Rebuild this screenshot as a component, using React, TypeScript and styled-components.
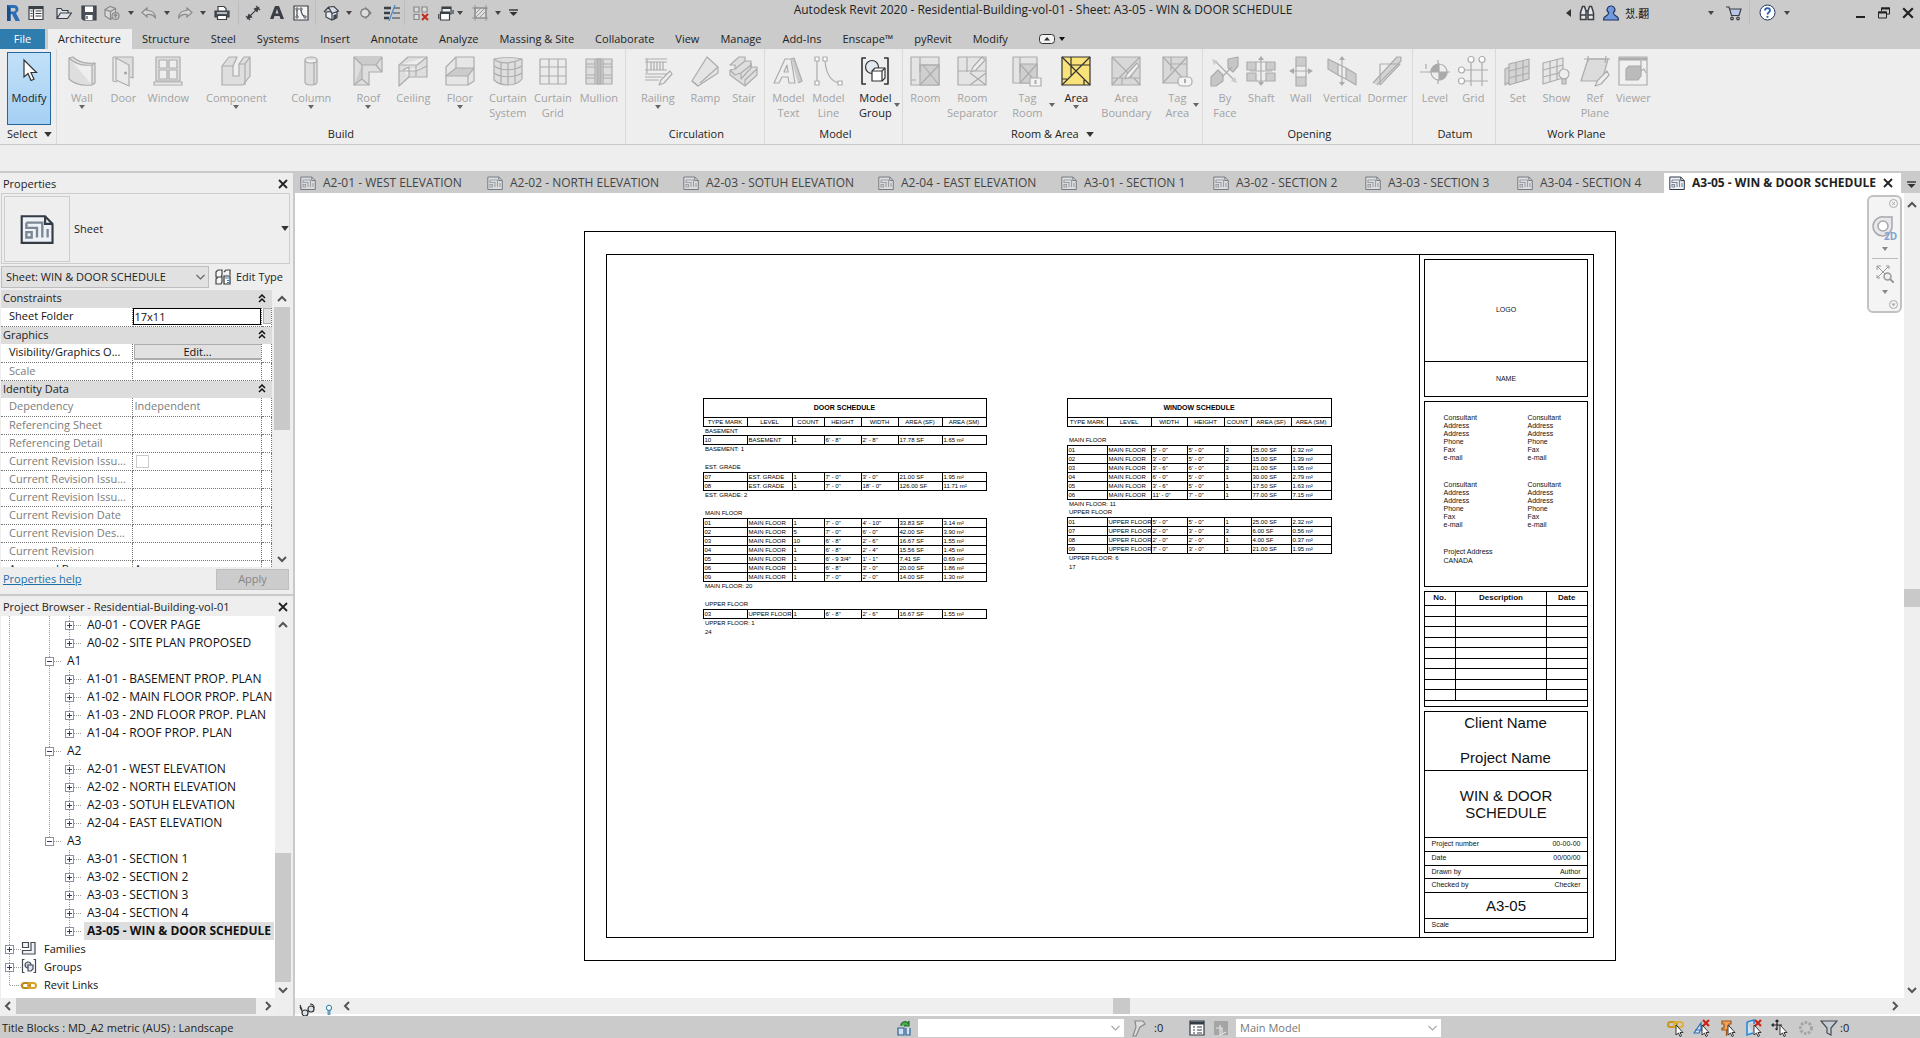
import React from "react";
import styled, { createGlobalStyle, css } from "styled-components";

const ui = '"Open Sans", "Noto Sans", "Noto Sans CJK KR", sans-serif';
const plot = '"Liberation Sans", Arial, sans-serif';

const Global = createGlobalStyle`
  *, *::before, *::after { box-sizing: border-box; }
  html, body, #root { height: 100%; }
  body { margin: 0; overflow: hidden; background: #cbcbcb; font: 11px/16px ${ui}; color: #222; }
  button, input, select { font: inherit; color: inherit; margin: 0; padding: 0; border: 0; border-radius: 0; background: none; }
  svg { display: block; flex: none; fill: none; }
`;

/* ---------- generic pieces ---------- */

const Window = styled.div`
  display: flex;
  flex-direction: column;
  height: 100vh;
  min-height: 0;
`;

const IconButton = styled.button<{ $w?: number }>`
  display: flex;
  align-items: center;
  justify-content: center;
  flex: none;
  width: ${(p) => p.$w ?? 24}px;
  height: 24px;
`;

const Tri = ({ c = "#444", s = 6 }: { c?: string; s?: number }) => (
  <svg width={s} height={s / 2 + 1} viewBox="0 0 6 4">
    <path d="M0 0h6L3 4z" fill={c} />
  </svg>
);

const Chevron = ({ dir, c = "#555" }: { dir: "up" | "down" | "left" | "right"; c?: string }) => {
  const d = {
    up: "M1 7l4-4 4 4",
    down: "M1 3l4 4 4-4",
    left: "M7 1L3 5l4 4",
    right: "M3 1l4 4-4 4",
  }[dir];
  return (
    <svg width="10" height="10" viewBox="0 0 10 10">
      <path d={d} stroke={c} strokeWidth="2" />
    </svg>
  );
};

const CloseX = ({ s = 10 }: { s?: number }) => (
  <svg width={s} height={s} viewBox="0 0 10 10">
    <path d="M1 1l8 8M9 1L1 9" stroke="#222" strokeWidth="1.8" />
  </svg>
);

const SheetIcon = ({ dark, s = 16 }: { dark?: boolean; s?: number }) => {
  const a = dark ? "#333b45" : "#777c84";
  const b = dark ? "#7b8797" : "#9aa0a8";
  return (
    <svg width={s} height={s} viewBox="0 0 16 16">
      <path d="M.8 2h11l3.5 3.6V14.500H.8z" fill={dark ? "#eef1f5" : "#dcdcdc"} stroke={a} />
      <path d="M11.8 2v3.600h3.500" stroke={a} />
      <path d="M3 5h7.500v7M3 5v2.500h5V12M3 9.500h2.500V12H3zM13 8v4" stroke={b} strokeWidth="1.100" />
    </svg>
  );
};

/* ---------- title bar ---------- */

const TitleBar = styled.header`
  display: grid;
  grid-template-columns: auto 1fr auto;
  align-items: center;
  height: 29px;
  flex: none;
  padding-bottom: 4px;
  background: #cbcbcb;
`;

const Quick = styled.div`
  display: flex;
  align-items: center;
  width: 524px;
`;

const Right = styled(Quick)`
  width: 358px;
`;

const AppTitle = styled.h1`
  margin: 0;
  padding-bottom: 6px;
  font-size: 12px;
  font-weight: 400;
  text-align: center;
  white-space: nowrap;
`;

const VSep = styled.span`
  flex: none;
  width: 1px;
  height: 24px;
  background: #bcbcbc;
`;

const Grow = styled.span`
  flex: 1;
`;

const RevitLogo = styled.span`
  flex: none;
  width: 26px;
  display: flex;
  justify-content: center;
`;

const UserName = styled.span`
  width: 80px;
  padding-left: 2px;
  font: 11px/14px "Noto Sans CJK KR", sans-serif;
`;

const Q = ({ children }: { children: React.ReactNode }) => (
  <svg width="16" height="16" viewBox="0 0 16 16" stroke="#3a3f46" strokeWidth="1.2">
    {children}
  </svg>
);

const quickIcons: Record<string, React.ReactNode> = {
  home: <Q><path d="M1 1.500h14v13H1z" fill="#fff" /><path d="M1 3h14" strokeWidth="2.400" /><path d="M5.500 4v10M7.500 6h6M7.500 8.500h6M7.500 11h6M2.500 6h2M2.500 8.500h2M2.500 11h2" /></Q>,
  open: <Q><path d="M1 13.500v-10h4l1.500 2H12V8M1 13.500L4.500 8H15.500l-4 5.500z" fill="#dfe3e8" /></Q>,
  save: <Q><path d="M1 1h14v14H2.500L1 13.500z" fill="#4a505a" /><path d="M4 1.500h8V7H4zM4.500 10h7v5h-7z" fill="#fff" stroke="none" /><path d="M6 11v3" /></Q>,
  sync: <Q><g stroke="#8a8a8a"><path d="M1 4.500L6 1.500l5.500 2v7l-5 4L1 11zM1 4.500l5.500 2 5-3M6.500 6.500v8" fill="#d8d8d8" /><circle cx="11.500" cy="11" r="3.500" fill="#c4c4c4" /><path d="M10 11l1.500-2 1.500 2M11.500 9v4" /></g></Q>,
  undo: <Q><path d="M6 3L1 7.500 6 12V9.500c4-.5 6.500 0 8.500 4C14.500 8 11 5.500 6 5.500z" stroke="#8a8a8a" fill="#d6d6d6" /></Q>,
  redo: <Q><path d="M10 3l5 4.500L10 12V9.500c-4-.5-6.500 0-8.500 4C1.500 8 5 5.500 10 5.500z" stroke="#8a8a8a" fill="#d6d6d6" /></Q>,
  print: <Q><path d="M4 6V1.500h6l2 2V6" fill="#fff" /><path d="M1 6h14v6H1z" fill="#4a505a" /><path d="M3.500 10.500h9v4h-9z" fill="#fff" /><path d="M3 8h10" stroke="#fff" /></Q>,
  measure: <Q><path d="M3 13L13 3" /><path d="M13.500 2.500L9.500 4l2.500 2.500zM2.500 13.500L4 9.500 6.500 12z" fill="#3a3f46" /><path d="M11 1l4 4M1 11l4 4" /></Q>,
  detail: <Q><path d="M1 1h14v14H1z" fill="#f4f4f4" /><path d="M4 4v8M8 4c0 4 1 7 5 8" stroke="#4a505a" /><path d="M3 3h2v2H3zM3 11h2v2H3zM7 3h2v2H7zM11 11h2v2h-2z" fill="#fff" strokeWidth=".8" /></Q>,
  house: <Q><path d="M3 7v5l6 3 5-2.500V6.500z" fill="#e9eef4" /><path d="M1 7l4.500-5L11 1.500 15.500 6 9 8.500 5.500 2" fill="#d5dce4" /><path d="M9 8.500V15" /><path d="M11 10.500l2-.7v3.200l-2 1z" fill="#4a505a" /></Q>,
  section: <Q><path d="M7 1.500L14 8l-7 6.500z" fill="#8a8a8a" stroke="none" /><circle cx="7" cy="8" r="4.200" stroke="#777" fill="#dedede" /></Q>,
  thin: <Q><path d="M0 3h7M0 8h6M0 13h5" strokeWidth="2.400" /><path d="M10 3h6M9 8h7M8 13h8" strokeWidth="1" /><path d="M11 0L5 16" stroke="#3b8bd6" /></Q>,
  closeHidden: <Q><path d="M1 2h5v5H1zM9 2h5v5H9zM1 9.500h5v5H1z" fill="#ddd" stroke="#888" /><path d="M9 9l6 6M15 9l-6 6" stroke="#c22b20" strokeWidth="2" /></Q>,
  switchWin: <Q><path d="M4 2h9v7H4z" fill="#eee" /><path d="M2.500 7h9v8h-9z" fill="#fff" /><path d="M3 8h8M4 3h9" strokeWidth="2" /><path d="M15 5V9M.8 9v5" /></Q>,
  hatch: <Q><g stroke="#8a8a8a"><path d="M3 3h11v10H3z" fill="#ddd" /><path d="M0 3h16M3 0v16M14 0v16M0 13h16M4 8l5-5M4 12l9-9M8 12l5-5" strokeWidth=".8" /></g></Q>,
  find: <Q><path d="M2 6l1.500-4.500h2L7 6v8.500H1.500V8zM14 6l-1.500-4.500h-2L9 6v8.500h5.500V8z" fill="#e6e6e6" strokeWidth="1.500" /><path d="M7 6h2M1.500 10H7M9 10h5.500" strokeWidth="1.500" /></Q>,
  user: <Q><path d="M8 1a3.600 3.600 0 0 1 2.400 6.500c0 2 .6 2.500 4 4.500.8.600 1 1.500 1 3H.6c0-1.500.2-2.400 1-3 3.400-2 4-2.500 4-4.500A3.600 3.600 0 0 1 8 1z" fill="#6e9ae0" stroke="#24335e" /></Q>,
  cart: <Q><path d="M0 2h3l2.500 8.500H13L15 4H4" fill="#b9c6ea" /><circle cx="6" cy="13.500" r="1.300" /><circle cx="12" cy="13.500" r="1.300" /></Q>,
};

const TitleRow = () => (
  <TitleBar>
    <Quick>
      <RevitLogo>
        <svg width="16" height="18" viewBox="0 0 16 18">
          <path d="M2 1h7c5 0 6 6 2 8l4 8h-4.500L7 10H5.500v7H2z" fill="#2c6db5" />
          <path d="M5.500 4H9c2 0 2 3.500 0 3.500H5.500z" fill="#cbcbcb" />
          <path d="M2 1l3.500 3v13H2z" fill="#184f8c" />
        </svg>
      </RevitLogo>
      <IconButton $w={20} aria-label="Home">{quickIcons.home}</IconButton>
      <IconButton $w={36} aria-label="Open">{quickIcons.open}</IconButton>
      <IconButton $w={14} aria-label="Save">{quickIcons.save}</IconButton>
      <IconButton $w={32} aria-label="Synchronize">{quickIcons.sync}</IconButton>
      <IconButton $w={6} aria-label="Synchronize options"><Tri /></IconButton>
      <IconButton $w={30} aria-label="Undo">{quickIcons.undo}</IconButton>
      <IconButton $w={6} aria-label="Undo options"><Tri /></IconButton>
      <IconButton $w={30} aria-label="Redo">{quickIcons.redo}</IconButton>
      <IconButton $w={6} aria-label="Redo options"><Tri /></IconButton>
      <IconButton $w={32} aria-label="Print">{quickIcons.print}</IconButton>
      <VSep />
      <IconButton $w={28} aria-label="Measure">{quickIcons.measure}</IconButton>
      <IconButton $w={20} aria-label="Text">
        <svg width="14" height="15" viewBox="0 0 14 15"><path d="M5 1h4l5 13h-3.500l-1-3h-5l-1 3H0zM7 4L5.500 8.500h3z" fill="#3a3f46" fillRule="evenodd" /></svg>
      </IconButton>
      <IconButton $w={28} aria-label="Detail view">{quickIcons.detail}</IconButton>
      <VSep />
      <IconButton $w={30} aria-label="3D view">{quickIcons.house}</IconButton>
      <IconButton $w={6} aria-label="3D view options"><Tri /></IconButton>
      <IconButton $w={28} aria-label="Section">{quickIcons.section}</IconButton>
      <IconButton $w={24} aria-label="Thin lines">{quickIcons.thin}</IconButton>
      <VSep />
      <IconButton $w={32} aria-label="Close hidden windows">{quickIcons.closeHidden}</IconButton>
      <IconButton $w={18} aria-label="Switch windows">{quickIcons.switchWin}</IconButton>
      <IconButton $w={10} aria-label="Window options"><Tri /></IconButton>
      <IconButton $w={30} aria-label="Hatch">{quickIcons.hatch}</IconButton>
      <IconButton $w={6} aria-label="Hatch options"><Tri /></IconButton>
      <IconButton aria-label="Customize">
        <svg width="9" height="8" viewBox="0 0 9 8"><path d="M0 1h9" stroke="#333" strokeWidth="1.400" /><path d="M.5 3h8l-4 4z" fill="#333" /></svg>
      </IconButton>
    </Quick>
    <AppTitle>Autodesk Revit 2020 - Residential-Building-vol-01 - Sheet: A3-05 - WIN &amp; DOOR SCHEDULE</AppTitle>
    <Right>
      <IconButton $w={13} aria-label="Collapse search">
        <svg width="5" height="8" viewBox="0 0 5 8"><path d="M5 0v8L0 4z" fill="#333" /></svg>
      </IconButton>
      <IconButton aria-label="Search">{quickIcons.find}</IconButton>
      <IconButton aria-label="Account">{quickIcons.user}</IconButton>
      <UserName>챘.翻</UserName>
      <IconButton $w={16} aria-label="Account menu"><Tri /></IconButton>
      <IconButton $w={30} aria-label="Store">{quickIcons.cart}</IconButton>
      <VSep />
      <IconButton $w={34} aria-label="Help">
        <svg width="17" height="17" viewBox="0 0 17 17"><circle cx="8.500" cy="8.500" r="7.500" fill="#fff" stroke="#24335e" /><path d="M6 6.500c0-3.200 5-3.200 5 0 0 1.800-2.500 1.800-2.500 4" stroke="#2b5cb0" strokeWidth="1.800" /><circle cx="8.500" cy="12.800" r="1.100" fill="#2b5cb0" /></svg>
      </IconButton>
      <IconButton $w={6} aria-label="Help menu"><Tri /></IconButton>
      <Grow />
      <IconButton aria-label="Minimize"><svg width="9" height="10" viewBox="0 0 9 10"><path d="M0 9h9" stroke="#222" strokeWidth="2" /></svg></IconButton>
      <IconButton aria-label="Restore"><svg width="12" height="12" viewBox="0 0 12 12"><path d="M3.500 4V1h8v6H9M.5 5h8v6h-8z" stroke="#222" /><path d="M3 1.500h9M0 5.500h9" stroke="#222" strokeWidth="2" /></svg></IconButton>
      <IconButton aria-label="Close"><CloseX s={12} /></IconButton>
    </Right>
  </TitleBar>
);

/* ---------- ribbon tabs ---------- */

const RibbonTabs = styled.nav`
  display: flex;
  flex: none;
  height: 20px;
  background: #cbcbcb;
`;

const RibbonTab = styled.button<{ $kind?: "file" | "active" }>`
  padding: 0 11px 0 10px;
  line-height: 20px;
  white-space: nowrap;
  ${(p) => p.$kind === "file" && css`width: 45px; margin-right: 3px; padding: 0; background: #2f7cae; color: #fff;`}
  ${(p) => p.$kind === "active" && css`background: #eeeeee;`}
`;

const RibbonToggle = styled.button`
  display: flex;
  align-items: center;
  gap: 4px;
  margin-left: 20px;
`;

const tabNames = ["Structure", "Steel", "Systems", "Insert", "Annotate", "Analyze", "Massing & Site", "Collaborate", "View", "Manage", "Add-Ins", "Enscape™", "pyRevit", "Modify"];

/* ---------- ribbon ---------- */

const Ribbon = styled.section`
  display: flex;
  flex: none;
  height: 96px;
  background: #eeeeee;
  border-bottom: 1px solid #c9c9c9;
`;

const Panel = styled.div<{ $pad: number; $end: number }>`
  display: flex;
  flex-direction: column;
  justify-content: space-between;
  padding: 3px ${(p) => p.$end}px 2px ${(p) => p.$pad}px;
  border-right: 1px solid #dadada;
  &:last-child { border-right: 0; }
`;

const Tools = styled.div`
  display: flex;
  height: 74px;
`;

const PanelTitle = styled.div`
  display: flex;
  align-items: center;
  justify-content: center;
  gap: 7px;
  line-height: 16px;
`;

const Tool = styled.button<{ $w: number; $state?: "on" | "active" }>`
  position: relative;
  display: flex;
  flex-direction: column;
  align-items: center;
  width: ${(p) => p.$w}px;
  height: 73px;
  padding-top: ${(p) => (p.$state === "active" ? 1 : 2)}px;
  line-height: 15px;
  white-space: nowrap;
  color: ${(p) => (p.$state ? "#222" : "#a3a3a3")};
  ${(p) => p.$state === "active" && css`
    border: 1px solid #2467a0;
    background: linear-gradient(#c2e0f8, #a5d0f3);
  `}
`;

const ToolText = styled.span`
  margin-top: 2px;
  text-align: center;
  white-space: pre-line;
`;

const SideArrow = styled.span`
  position: absolute;
  right: 0;
  bottom: 18px;
`;

const I = ({ children, c = "#acacac" }: { children: React.ReactNode; c?: string }) => (
  <svg width="32" height="34" viewBox="0 0 32 32" stroke={c} strokeWidth="1.2" strokeLinejoin="round">
    {children}
  </svg>
);

const g = "#dedede";
const toolIcons: Record<string, React.ReactNode> = {
  modify: <svg width="32" height="34" viewBox="0 0 32 32"><path d="M11 5v17l4-3.500 3 7 3-1.300-3-6.700h5.500z" fill="#fff" stroke="#333" strokeWidth="1.200" /></svg>,
  wall: <I><path d="M3 3l4-1c5 5 13 7 22 6v20l-3 2C16 31 8 29 3 24z" fill={g} /><path d="M3 3c6 6 14 8 23 7v20M26 10l3-2" fill="#eee" /></I>,
  door: <I><path d="M6 2h20v21l-3-1" fill={g} /><path d="M6 2v24l4 1" /><path d="M9 3l13 7v21L9 25z" fill="#eaeaea" /><circle cx="18.500" cy="18" r="1" fill="#777" /></I>,
  window: <I><path d="M4 2h24v24H4z" fill={g} /><path d="M7 5h8v8H7zM17 5h8v8h-8zM7 15h8v9H7zM17 15h8v9h-8z" fill="#eee" /><path d="M2 27h28v3H2z" fill="#eaeaea" /></I>,
  component: <I><path d="M2 11l7-9h8l-4 9v10h6V9l5-7h6v19l-7 9H2z" fill={g} /><path d="M2 11h11M19 9h6l5-7M25 9v21" /></I>,
  column: <I><path d="M10 5c0-4 12-4 12 0v22c0 4-12 4-12 0z" fill={g} /><path d="M10 5c0 4 12 4 12 0M19 7v22" fill="#f2f2f2" /></I>,
  roof: <I><path d="M2 2h28v15H17v13H2z" fill={g} /><path d="M2 2l8 8h14l6-8M10 10v14l-8 6M10 24l7 6M24 10l6 7" fill="#ccc" /></I>,
  ceiling: <I><path d="M2 10l9-8h19v20H12l-10 9z" fill={g} /><path d="M2 10h18l10-8M2 16h17l11-5M12 22V12l-6 3" fill="#eee" /><path d="M19 11v10" /></I>,
  floor: <I><path d="M2 12L12 2h18v24l-6 4H2z" fill="#e6e6e6" /><path d="M2 21l10-8h18l-6 8zM24 21v9M12 2v11" fill="#ccc" /></I>,
  csystem: <I><path d="M2 4c8-2 20-2 28 0v20c-3 4-8 6-14 6S5 28 2 25z" fill={g} /><path d="M2 4c6 5 16 5 28 0M2 11c7 5 20 5 28 0M2 18c7 5 20 5 28 0M9 7v22M16 8v22M23 7v22" fill="none" /></I>,
  cgrid: <I><path d="M3 4h26v25H3z" fill="#ebebeb" /><path d="M12 4v25M21 4v25M3 12h26M3 21h26" /></I>,
  mullion: <I><path d="M3 4h26v25H3z" fill={g} /><path d="M12 4v25M20 4v25M3 9h9M3 12h9M3 20h9M3 23h9M20 9h9M20 12h9M20 20h9M20 23h9" /><path d="M14 4h4v25h-4z" fill="#bbb" /></I>,
  railing: <I><path d="M3 4h22M3 7h22M3 15h22M5 4v14M9 7v8M12 7v8M15 7v8M18 7v8M21 7v8M3 19h22M3 22h17M3 25h14" /><path d="M28 16l-9 9-2 5 5-2 8-9z" fill="#eee" /></I>,
  ramp: <I><path d="M3 26L18 2l11 10v6L9 31z" fill="#e4e4e4" /><path d="M3 26l6 5M29 12L11 28" /></I>,
  stair: <I><path d="M2 10l9-8h6v4h6v6h6v8L17 31 2 20v-5l5-1v-4z" fill={g} /><path d="M7 14l10-8M13 18l10-8M2 15l5 5 6-2v6l10-11v-5M17 31v-6l12-11" /></I>,
  mtext: <I><path d="M2 28L13 4h6l4 24h-6l-1-6h-6l-3 6zM12 17h4l-1-7z" fill="#eee" /><path d="M19 4l3-1 8 23-4 2" fill="#ccc" /></I>,
  mline: <I><path d="M5 6v20M13 6c1 12 5 20 14 22" /><path d="M3 2h4v4H3zM3 26h4v4H3zM11 2h4v4h-4zM26 26h4v4h-4z" fill="#fff" /></I>,
  mgroup: <I c="#333"><path d="M7 3H3v26h4M25 3h4v26h-4" strokeWidth="1.600" /><circle cx="13" cy="12" r="6.500" fill="#e2e9f0" /><path d="M13 16l3-3h10v10l-3 3H13z" fill="#fff" /><path d="M13 16h10v10M23 16l3-3" /></I>,
  room: <I><path d="M2 2h28v28H2z" fill="#e4e4e4" /><path d="M11 10h19v20H11z" fill="#cfcfcf" /><path d="M11 2v15M11 10h19L11 30M14 10l16 20M2 25h5" /></I>,
  rsep: <I><path d="M2 2h28v28H2z" fill="#e4e4e4" /><path d="M11 2v15M2 16h28M14 18l16 12M30 18L14 30" /><path d="M26 2l-9 10-2 5 5-2 9-10z" fill="#eee" /></I>,
  troom: <I><path d="M2 2h24v26H2z" fill="#e4e4e4" /><path d="M9 9h17v19H9z" fill="#cfcfcf" /><path d="M9 2v16M9 9l16 18M26 9L9 28" /><path d="M19 23h11v8H19z" fill="#f4f4f4" /><path d="M24.500 25v4" strokeWidth="2" /></I>,
  area: <I c="#333"><path d="M2 2h28v28H2z" fill="#f9e27a" /><path d="M2 2l28 28M30 2L2 30M11 2v18M11 10h19M2 24h5M24 30v-5" /></I>,
  abound: <I><path d="M2 2h28v28H2z" fill="#d8d8d8" /><path d="M2 2l20 20M30 2L9 23M2 23h28M8 23l-6 7M24 23l6 7M12 23v7" /><path d="M27 8L17 19l-2 5 5-2 9-11z" fill="#eee" /></I>,
  tarea: <I><path d="M2 2h24v26H2z" fill="#d8d8d8" /><path d="M2 2l24 26M26 2L2 28M10 9h16M10 2v14" /><rect x="17" y="22" width="14" height="9" rx="4" fill="#f4f4f4" /><path d="M24 24v4" strokeWidth="2" /></I>,
  byface: <I><path d="M2 22l7-7 5 5v6l-7 5H2zM19 4l10-2v9l-5 6-5-4z" fill="#c6c6c6" /><path d="M7 7l18 18M13 22L23 12" /><path d="M3 4l6 2-4 4zM28 28l-6-2 4-4z" fill="#ccc" stroke="none" /></I>,
  shaft: <I><path d="M2 7h9v8H2zM21 7h9v8h-9zM2 18h9v8H2zM21 18h9v8h-9z" fill="#ccc" /><path d="M11 7h10M11 26h10M16 3v26M5 16h22" /><path d="M16 1l3 4h-6zM16 31l3-4h-6z" fill="#aaa" stroke="none" /></I>,
  owall: <I><path d="M11 2h10v9H11zM11 22h10v9H11z" fill="#ccc" /><path d="M11 11v11M21 11v11M6 16h20" /><path d="M4 16l5-3v6zM28 16l-5-3v6z" fill="#aaa" stroke="none" /></I>,
  vertical: <I><path d="M2 4l10 5v11L2 14zM20 13l10 6v11l-10-6z" fill="#ccc" /><path d="M12 9l8 4M12 20l8 4M16 3v26" /><path d="M16 1l3 4h-6zM16 31l3-4h-6z" fill="#aaa" stroke="none" /></I>,
  dormer: <I><path d="M2 28L26 2h4v4L6 30" fill="#d4d4d4" /><path d="M9 30V9h20L9 30" /></I>,
  level: <I><path d="M1 17h30M7 9v5M19 5v24" /><circle cx="20" cy="17" r="8" fill="#eee" /><path d="M20 9a8 8 0 0 0-8 8h8zM20 25a8 8 0 0 0 8-8h-8z" fill="#aaa" /></I>,
  grid: <I><path d="M14 8v23M25 8v23M8 15h23M8 26h23" /><circle cx="14" cy="4.500" r="3" fill="#fff" /><circle cx="25" cy="4.500" r="3" fill="#fff" /><circle cx="4.500" cy="15" r="3" fill="#fff" /><circle cx="4.500" cy="26" r="3" fill="#fff" /></I>,
  set: <I><path d="M3 14l4-2v15l-4 3zM7 9l20-5v20L7 30z" fill="#d4d4d4" /><path d="M14 7v21M21 5v21M7 16l20-5M7 23l20-5" /></I>,
  show: <I><path d="M3 8l20-5v20L3 29z" fill="#e6e6e6" /><path d="M10 6v21M17 4v21M3 15l20-5M3 22l20-5" /><circle cx="24" cy="19" r="5" fill="#eee" /><path d="M22 24h4v5h-4z" fill="#ccc" /></I>,
  ref: <I><path d="M9 4h20l-6 22H2z" fill="#dcdcdc" /><path d="M5 4h26M9 1v6M27 1l-1 7" /><path d="M28 16l-9 9-3 6 6-2 8-9z" fill="#eee" /></I>,
  viewer: <I><path d="M2 2h28v28H2z" fill="#f0f0f0" /><path d="M2 4h28" strokeWidth="3" /><path d="M9 14l3-3h12v10l-3 4H9z" fill="#bbb" /><path d="M24 3v13l3-2 2 4" fill="#eee" /></I>,
};

type ToolSpec = { icon: string; label: string; w: number; arrow?: "below" | "side"; state?: "on" | "active" };

const panels: { title: string; pad: number; end: number; menu?: boolean; tools: ToolSpec[] }[] = [
  { title: "Select", pad: 7, end: 4, menu: true, tools: [{ icon: "modify", label: "Modify", w: 44, state: "active" }] },
  {
    title: "Build", pad: 4, end: 5, tools: [
      { icon: "wall", label: "Wall", w: 41, arrow: "below" },
      { icon: "door", label: "Door", w: 42 },
      { icon: "window", label: "Window", w: 48 },
      { icon: "component", label: "Component", w: 88, arrow: "below" },
      { icon: "column", label: "Column", w: 62, arrow: "below" },
      { icon: "roof", label: "Roof", w: 52, arrow: "below" },
      { icon: "ceiling", label: "Ceiling", w: 38 },
      { icon: "floor", label: "Floor", w: 55, arrow: "below" },
      { icon: "csystem", label: "Curtain\nSystem", w: 41 },
      { icon: "cgrid", label: "Curtain\nGrid", w: 49 },
      { icon: "mullion", label: "Mullion", w: 43 },
    ],
  },
  {
    title: "Circulation", pad: 9, end: 7, tools: [
      { icon: "railing", label: "Railing", w: 45, arrow: "below" },
      { icon: "ramp", label: "Ramp", w: 50 },
      { icon: "stair", label: "Stair", w: 27 },
    ],
  },
  {
    title: "Model", pad: 5, end: 2, tools: [
      { icon: "mtext", label: "Model\nText", w: 36 },
      { icon: "mline", label: "Model\nLine", w: 44 },
      { icon: "mgroup", label: "Model\nGroup", w: 50, arrow: "side", state: "on" },
    ],
  },
  {
    title: "Room & Area", pad: 2, end: 3, menu: true, tools: [
      { icon: "room", label: "Room", w: 40 },
      { icon: "rsep", label: "Room\nSeparator", w: 54 },
      { icon: "troom", label: "Tag\nRoom", w: 56, arrow: "side" },
      { icon: "area", label: "Area", w: 42, arrow: "below", state: "on" },
      { icon: "abound", label: "Area\nBoundary", w: 58 },
      { icon: "tarea", label: "Tag\nArea", w: 44, arrow: "side" },
    ],
  },
  {
    title: "Opening", pad: 3, end: 0, tools: [
      { icon: "byface", label: "By\nFace", w: 37 },
      { icon: "shaft", label: "Shaft", w: 36 },
      { icon: "owall", label: "Wall", w: 43 },
      { icon: "vertical", label: "Vertical", w: 40 },
      { icon: "dormer", label: "Dormer", w: 50 },
    ],
  },
  {
    title: "Datum", pad: 3, end: 2, tools: [
      { icon: "level", label: "Level", w: 37 },
      { icon: "grid", label: "Grid", w: 40 },
    ],
  },
  {
    title: "Work Plane", pad: 3, end: 4, tools: [
      { icon: "set", label: "Set", w: 37 },
      { icon: "show", label: "Show", w: 40 },
      { icon: "ref", label: "Ref\nPlane", w: 37 },
      { icon: "viewer", label: "Viewer", w: 40 },
    ],
  },
];

const OptionBar = styled.div`
  flex: none;
  height: 28px;
  background: #eeeeee;
  border-bottom: 2px solid #c9c9c9;
`;

/* ---------- scroll bars ---------- */

const Bar = styled.div<{ $dir: "v" | "h" }>`
  display: flex;
  flex: none;
  flex-direction: ${(p) => (p.$dir === "v" ? "column" : "row")};
  ${(p) => (p.$dir === "v" ? "width: 16px; padding-top: 1px;" : "height: 16px;")}
  background: #efefef;
`;

const BarArrow = styled.button`
  display: flex;
  align-items: center;
  justify-content: center;
  flex: none;
  width: 16px;
  height: 16px;
`;

const Part = styled.span<{ $grow: number; $thumb?: boolean }>`
  flex: ${(p) => p.$grow} 1 0;
  background: ${(p) => (p.$thumb ? "#c9c9c9" : "none")};
`;

const BarCorner = styled.span`
  width: 17px;
  background: #eeeeee;
`;

const Scroll = ({ dir, parts }: { dir: "v" | "h"; parts: [number, number, number] }) => (
  <>
    <BarArrow aria-label="Scroll back"><Chevron dir={dir === "v" ? "up" : "left"} /></BarArrow>
    <Part $grow={parts[0]} />
    <Part $grow={parts[1]} $thumb />
    <Part $grow={parts[2]} />
    <BarArrow aria-label="Scroll forward"><Chevron dir={dir === "v" ? "down" : "right"} /></BarArrow>
  </>
);

/* ---------- side panels ---------- */

const Body = styled.div`
  display: flex;
  flex: 1;
  min-height: 0;
`;

const Side = styled.aside`
  display: flex;
  flex-direction: column;
  width: 295px;
  flex: none;
  background: #eeeeee;
  border-right: 2px solid #c9c9c9;
`;

const SideHead = styled.h2`
  display: flex;
  align-items: center;
  justify-content: space-between;
  flex: none;
  height: 20px;
  margin: 0;
  padding: 2px 5px 0 3px;
  font-size: 11px;
  font-weight: 400;
`;

const HeadClose = styled.button`
  padding: 0;
`;

const Properties = styled.section`
  display: flex;
  flex-direction: column;
  flex: none;
  height: 421px;
`;

const TypeBox = styled.div`
  display: flex;
  align-items: center;
  flex: none;
  height: 71px;
  margin: 0 3px 0 1px;
  padding: 2px 0 2px 2px;
  gap: 4px;
  border: 1px solid #cdcdcd;
`;

const Thumb = styled.span`
  display: flex;
  align-items: center;
  justify-content: center;
  width: 66px;
  height: 66px;
  border: 1px solid #cdcdcd;
`;

const TypeRow = styled.div`
  display: flex;
  align-items: center;
  flex: none;
  height: 26px;
  padding: 0 3px 0 1px;
  gap: 6px;
`;

const SelectWrap = styled.span<{ $w: number; $h: number }>`
  display: grid;
  grid-template-columns: 1fr 18px;
  align-items: center;
  width: ${(p) => p.$w}px;
  height: ${(p) => p.$h}px;
  & > * { grid-row: 1; }
  & > svg { grid-column: 2; justify-self: center; pointer-events: none; }
`;

const Select = styled.select<{ $plain?: boolean }>`
  grid-column: 1 / 3;
  width: 100%;
  height: 100%;
  appearance: none;
  padding-left: 4px;
  background: ${(p) => (p.$plain ? "#fff" : "#e1e1e1")};
  border: ${(p) => (p.$plain ? "0" : "1px solid #bdbdbd")};
  color: ${(p) => (p.$plain ? "#777" : "#222")};
  font-size: 11px;
`;

const EditType = styled.button`
  display: flex;
  align-items: center;
  gap: 5px;
  white-space: nowrap;
`;

const GridArea = styled.div`
  display: flex;
  flex: 1;
  min-height: 0;
  padding: 0 3px 0 1px;
  gap: 2px;
`;

const GridClip = styled.div`
  flex: 1;
  min-width: 0;
  overflow: hidden;
  background: #fff;
`;

const PropTable = styled.table`
  width: 100%;
  table-layout: fixed;
  border-collapse: collapse;
  th, td { height: 18px; padding: 0; font-weight: 400; text-align: left; line-height: 16px; white-space: nowrap; overflow: hidden; vertical-align: top; }
`;

const GroupHead = styled.th`
  background: #dcdcdc;
`;

const GroupLine = styled.span`
  display: flex;
  align-items: center;
  justify-content: space-between;
  padding: 0 6px 0 2px;
`;

const Cell = styled.td<{ $dim?: boolean }>`
  border-bottom: 1px dotted #777;
  border-right: 1px dotted #777;
  color: ${(p) => (p.$dim ? "#7c7c7c" : "#111")};
`;

const PropLabel = styled.label`
  display: block;
  padding-left: 8px;
`;

const PropValue = styled.span`
  display: block;
  padding-left: 2px;
`;

const PropInput = styled.input`
  display: block;
  width: 100%;
  height: 17px;
  padding-left: 1px;
  border: 1px solid #000;
`;

const PropButton = styled.button<{ $small?: boolean }>`
  display: block;
  width: ${(p) => (p.$small ? "10px" : "100%")};
  height: 16px;
  margin-left: 1px;
  border: 1px solid #adadad;
  border-bottom-width: ${(p) => (p.$small ? 1 : 2)}px;
  background: #e1e1e1;
  line-height: 13px;
`;

const PropCheck = styled.input`
  display: block;
  appearance: none;
  width: 13px;
  height: 13px;
  margin: 2px 0 0 3px;
  border: 1px solid #ccc;
  background: #fff;
`;

const PropFoot = styled.div`
  display: flex;
  align-items: center;
  justify-content: space-between;
  flex: none;
  height: 27px;
  padding: 0 4px 3px 3px;
`;

const HelpLink = styled.a`
  color: #1e6fa8;
`;

const Apply = styled.button`
  width: 73px;
  height: 21px;
  border: 1px solid #bfbfbf;
  background: #cccccc;
  color: #858585;
`;

const Expand = () => (
  <svg width="8" height="9" viewBox="0 0 8 9"><path d="M1 4l3-3 3 3M1 8l3-3 3 3" stroke="#111" strokeWidth="1.500" /></svg>
);

type PropRow = { head?: string; label?: string; value?: React.ReactNode; extra?: React.ReactNode; dim?: boolean };

const propRows: PropRow[] = [
  { head: "Constraints" },
  { label: "Sheet Folder", value: <PropInput id="prop-1" defaultValue="17x11" />, extra: <PropButton $small aria-label="Associate parameter" /> },
  { head: "Graphics" },
  { label: "Visibility/Graphics O...", value: <PropButton id="prop-3">Edit...</PropButton> },
  { label: "Scale", dim: true },
  { head: "Identity Data" },
  { label: "Dependency", value: <PropValue>Independent</PropValue>, dim: true },
  { label: "Referencing Sheet", dim: true },
  { label: "Referencing Detail", dim: true },
  { label: "Current Revision Issu...", value: <PropCheck id="prop-9" type="checkbox" disabled />, dim: true },
  { label: "Current Revision Issu...", dim: true },
  { label: "Current Revision Issu...", dim: true },
  { label: "Current Revision Date", dim: true },
  { label: "Current Revision Des...", dim: true },
  { label: "Current Revision", dim: true },
  { label: "Approved By", value: <PropValue>Approver</PropValue> },
];

/* ---------- project browser ---------- */

const Browser = styled.section`
  display: flex;
  flex-direction: column;
  flex: 1;
  min-height: 0;
  padding-bottom: 2px;
  border-top: 2px solid #c9c9c9;
`;

const TreeArea = styled.div`
  display: flex;
  flex: 1;
  min-height: 0;
  padding: 0 2px 0 1px;
`;

const Tree = styled.ul`
  flex: 1;
  min-width: 0;
  margin: 0;
  padding: 0;
  overflow: hidden;
  list-style: none;
  background: #fff;
  font-size: 12px;
`;

const TreeRow = styled.li`
  display: flex;
  height: 18px;
  line-height: 17px;
  color: #111;
`;

const Rail = styled.svg`
  width: 20px;
  height: 18px;
`;

const TreeText = styled.span<{ $on?: boolean; $root?: boolean }>`
  flex: 1;
  min-width: 0;
  overflow: hidden;
  white-space: nowrap;
  margin-right: 1px;
  margin-left: 3px;
  padding-left: 3px;
  ${(p) => p.$on && css`font-weight: 700; background: #dedede;`}
  ${(p) => p.$root && css`font-size: 11px; padding-left: 4px;`}
`;

const dot = { stroke: "#999", strokeDasharray: "1 1" };
const Line = () => <Rail viewBox="0 0 20 18"><path d="M8.500 0v18" {...dot} /></Rail>;
const Blank = () => <Rail viewBox="0 0 20 18" />;
const Node = ({ open, last }: { open?: boolean; last?: boolean }) => (
  <Rail viewBox="0 0 20 18">
    <path d={last ? "M8.500 0v9M13 9.500h7" : "M8.500 0v18M13 9.500h7"} {...dot} />
    <rect x="4.500" y="5.500" width="8" height="8" fill="#fff" stroke="#8c93a0" />
    <path d={open ? "M6 9.500h5" : "M6 9.500h5M8.500 7v5"} stroke="#333a66" />
  </Rail>
);
const Leaf = () => <Rail viewBox="0 0 20 18"><path d="M8.500 0v9.500h11" {...dot} /></Rail>;

const treeGroups: { name?: string; sheets: string[] }[] = [
  { sheets: ["A0-01 - COVER PAGE", "A0-02 - SITE PLAN PROPOSED"] },
  { name: "A1", sheets: ["A1-01 - BASEMENT PROP. PLAN", "A1-02 - MAIN FLOOR PROP. PLAN", "A1-03 - 2ND FLOOR PROP. PLAN", "A1-04 - ROOF PROP. PLAN"] },
  { name: "A2", sheets: ["A2-01 - WEST ELEVATION", "A2-02 - NORTH ELEVATION", "A2-03 - SOTUH ELEVATION", "A2-04 - EAST ELEVATION"] },
  { name: "A3", sheets: ["A3-01 - SECTION 1", "A3-02 - SECTION 2", "A3-03 - SECTION 3", "A3-04 - SECTION 4", "A3-05 - WIN & DOOR SCHEDULE"] },
];

/* ---------- document area ---------- */

const Docs = styled.main`
  display: flex;
  flex-direction: column;
  flex: 1;
  min-width: 0;
  background: #fff;
  padding-bottom: 2px;
`;

const DocTabs = styled.nav`
  display: flex;
  flex: none;
  height: 20px;
  background: #cbcbcb;
`;

const DocTab = styled.button<{ $w: number; $on?: boolean }>`
  display: flex;
  align-items: center;
  gap: 7px;
  width: ${(p) => p.$w}px;
  padding-left: 5px;
  color: #444;
  white-space: nowrap;
  font-size: 12px;
  ${(p) => p.$on && css`background: #fff; color: #222; font-weight: 700;`}
`;

const docTabs: [string, number][] = [
  ["A2-01 - WEST ELEVATION", 187],
  ["A2-02 - NORTH ELEVATION", 196],
  ["A2-03 - SOTUH ELEVATION", 195],
  ["A2-04 - EAST ELEVATION", 183],
  ["A3-01 - SECTION 1", 152],
  ["A3-02 - SECTION 2", 152],
  ["A3-03 - SECTION 3", 152],
  ["A3-04 - SECTION 4", 152],
];

const View = styled.div`
  display: flex;
  flex: 1;
  min-height: 0;
`;

const Canvas = styled.div`
  position: relative;
  display: flex;
  align-items: center;
  justify-content: center;
  flex: 1;
  min-width: 0;
  overflow: hidden;
`;

const NavBar = styled.div`
  position: absolute;
  top: 2px;
  right: 2px;
  display: flex;
  flex-direction: column;
  align-items: center;
  justify-content: space-between;
  width: 35px;
  height: 118px;
  padding: 2px;
  border: 2px solid #c2c2c2;
  border-radius: 6px;
  background: #f4f4f4;
`;

const NavEnd = styled.button`
  align-self: flex-end;
`;

const NavRule = styled.span`
  width: 26px;
  height: 1px;
  background: #bbb;
`;

const ViewBar = styled(Bar)`
  padding-top: 4px;
`;

const HFoot = styled(Bar)`
  width: 100%;
  padding-right: 17px;
`;

/* ---------- sheet ---------- */

const Sheet = styled.article`
  display: flex;
  width: 1032px;
  height: 730px;
  padding: 22px 21px;
  border: 1px solid #000;
  background: #fff;
  font: 7px/8px ${plot};
  color: #111;
`;

const Frame = styled.div`
  display: flex;
  flex: 1;
  border: 1px solid #000;
`;

const Drawing = styled.div`
  display: flex;
  align-items: flex-start;
  flex: 1;
  padding: 143px 0 0 96px;
  gap: 80px;
`;

const Schedule = styled.table`
  table-layout: fixed;
  border-collapse: collapse;
  width: min-content;
  font: 6px/8px ${plot};
  color: #000;
  td, th { padding: 0; white-space: nowrap; }
`;

const Caption = styled.th`
  height: 19px;
  border: 1px solid #000;
  font-size: 7px;
  font-weight: 700;
`;

const HeadCell = styled.th`
  height: 9px;
  border: 1px solid #000;
  font-weight: 400;
`;

const DataCell = styled.td`
  height: 9px;
  border: 1px solid #000;
`;

const DataText = styled.span`
  padding-left: 1px;
`;

const LabelCell = styled.td<{ $h: number }>`
  height: ${(p) => p.$h}px;
  line-height: 8px;
`;

const LabelText = styled.span`
  padding-left: 2px;
`;

type SRow = string | string[];

const ScheduleTable = ({ title, cols, heads, rows }: { title: string; cols: number[]; heads: string[]; rows: SRow[] }) => (
  <Schedule>
    <colgroup>{cols.map((w, i) => <col key={i} width={w} />)}</colgroup>
    <thead>
      <tr><Caption colSpan={7}>{title}</Caption></tr>
      <tr>{heads.map((h) => <HeadCell key={h}>{h}</HeadCell>)}</tr>
    </thead>
    <tbody>
      {rows.map((r, i) =>
        typeof r === "string" ? (
          <tr key={i}><LabelCell $h={r ? 9 : 10} colSpan={7}><LabelText>{r}</LabelText></LabelCell></tr>
        ) : (
          <tr key={i}>{r.map((c, j) => <DataCell key={j}><DataText>{c}</DataText></DataCell>)}</tr>
        )
      )}
    </tbody>
  </Schedule>
);

const doorRows: SRow[] = [
  "BASEMENT",
  ["10", "BASEMENT", "1", "6' - 8\"", "2' - 8\"", "17.78 SF", "1.65 m²"],
  "BASEMENT: 1",
  "",
  "EST. GRADE",
  ["07", "EST. GRADE", "1", "7' - 0\"", "3' - 0\"", "21.00 SF", "1.95 m²"],
  ["08", "EST. GRADE", "1", "7' - 0\"", "18' - 0\"", "126.00 SF", "11.71 m²"],
  "EST. GRADE: 2",
  "",
  "MAIN FLOOR",
  ["01", "MAIN FLOOR", "1", "7' - 0\"", "4' - 10\"", "33.83 SF", "3.14 m²"],
  ["02", "MAIN FLOOR", "5", "7' - 0\"", "6' - 0\"", "42.00 SF", "3.90 m²"],
  ["03", "MAIN FLOOR", "10", "6' - 8\"", "2' - 6\"", "16.67 SF", "1.55 m²"],
  ["04", "MAIN FLOOR", "1", "6' - 8\"", "2' - 4\"", "15.56 SF", "1.45 m²"],
  ["05", "MAIN FLOOR", "1", "6' - 9 3/4\"", "1' - 1\"", "7.41 SF", "0.69 m²"],
  ["06", "MAIN FLOOR", "1", "6' - 8\"", "3' - 0\"", "20.00 SF", "1.86 m²"],
  ["09", "MAIN FLOOR", "1", "7' - 0\"", "2' - 0\"", "14.00 SF", "1.30 m²"],
  "MAIN FLOOR: 20",
  "",
  "UPPER FLOOR",
  ["03", "UPPER FLOOR", "1", "6' - 8\"", "2' - 6\"", "16.67 SF", "1.55 m²"],
  "UPPER FLOOR: 1",
  "24",
];

const windowRows: SRow[] = [
  "",
  "MAIN FLOOR",
  ["01", "MAIN FLOOR", "5' - 0\"", "5' - 0\"", "3", "25.00 SF", "2.32 m²"],
  ["02", "MAIN FLOOR", "3' - 0\"", "5' - 0\"", "2", "15.00 SF", "1.39 m²"],
  ["03", "MAIN FLOOR", "3' - 6\"", "6' - 0\"", "3", "21.00 SF", "1.95 m²"],
  ["04", "MAIN FLOOR", "6' - 0\"", "5' - 0\"", "1", "30.00 SF", "2.79 m²"],
  ["05", "MAIN FLOOR", "3' - 6\"", "5' - 0\"", "1", "17.50 SF", "1.63 m²"],
  ["06", "MAIN FLOOR", "11' - 0\"", "7' - 0\"", "1", "77.00 SF", "7.15 m²"],
  "MAIN FLOOR: 11",
  "UPPER FLOOR",
  ["01", "UPPER FLOOR", "5' - 0\"", "5' - 0\"", "1", "25.00 SF", "2.32 m²"],
  ["07", "UPPER FLOOR", "2' - 0\"", "3' - 0\"", "3", "6.00 SF", "0.56 m²"],
  ["08", "UPPER FLOOR", "2' - 0\"", "2' - 0\"", "1", "4.00 SF", "0.37 m²"],
  ["09", "UPPER FLOOR", "7' - 0\"", "3' - 0\"", "1", "21.00 SF", "1.95 m²"],
  "UPPER FLOOR: 6",
  "17",
];

const TitleBlock = styled.aside`
  display: flex;
  flex-direction: column;
  gap: 4px;
  width: 174px;
  padding: 4px 5px 4px 4px;
  border-left: 1px solid #000;
`;

const Box = styled.div<{ $h?: number }>`
  display: flex;
  flex-direction: column;
  ${(p) => (p.$h ? `height: ${p.$h}px;` : "flex: 1;")}
  border: 1px solid #000;
`;

const Slot = styled.div<{ $h: number; $big?: boolean; $spread?: boolean }>`
  display: flex;
  flex-direction: ${(p) => (p.$spread ? "row" : "column")};
  align-items: center;
  justify-content: ${(p) => (p.$spread ? "space-between" : "center")};
  height: ${(p) => p.$h}px;
  padding: 0 6px 0 7px;
  text-align: center;
  border-bottom: 1px solid #000;
  ${(p) => p.$big && css`font-size: 15px; line-height: 17px;`}
  &:last-child { border-bottom: 0; }
`;

const Names = styled(Slot)`
  justify-content: space-between;
  padding: 2px 6px 4px;
`;

const Consultants = styled.div`
  display: grid;
  grid-template-columns: 84px 1fr;
  row-gap: 19px;
  padding: 12px 0 18px 19px;
`;

const Lines = styled.div`
  white-space: pre-line;
`;

const Address = styled.div`
  padding-left: 19px;
  line-height: 9px;
`;

const Revisions = styled.table`
  width: 100%;
  height: 109px;
  table-layout: fixed;
  border-collapse: collapse;
  font-size: 8px;
  th, td { padding: 0; border-bottom: 1px solid #000; border-right: 1px solid #000; }
  th:last-child, td:last-child { border-right: 0; }
  th { height: 14px; }
`;

const consultant = "Consultant\nAddress\nAddress\nPhone\nFax\ne-mail";

const SheetView = () => (
  <Sheet>
    <Frame>
      <Drawing>
        <ScheduleTable
          title="DOOR SCHEDULE"
          cols={[44, 45, 32, 37, 37, 44, 44]}
          heads={["TYPE MARK", "LEVEL", "COUNT", "HEIGHT", "WIDTH", "AREA (SF)", "AREA (SM)"]}
          rows={doorRows}
        />
        <ScheduleTable
          title="WINDOW SCHEDULE"
          cols={[40, 44, 36, 37, 27, 40, 40]}
          heads={["TYPE MARK", "LEVEL", "WIDTH", "HEIGHT", "COUNT", "AREA (SF)", "AREA (SM)"]}
          rows={windowRows}
        />
      </Drawing>
      <TitleBlock>
        <Box $h={138}>
          <Slot $h={102}>LOGO</Slot>
          <Slot $h={34}>NAME</Slot>
        </Box>
        <Box $h={186}>
          <Consultants>
            {[0, 1, 2, 3].map((k) => <Lines key={k}>{consultant}</Lines>)}
          </Consultants>
          <Address>Project Address<br />CANADA</Address>
        </Box>
        <Box $h={116}>
          <Revisions>
            <colgroup><col width="31" /><col width="91" /><col /></colgroup>
            <thead><tr><th>No.</th><th>Description</th><th>Date</th></tr></thead>
            <tbody>{Array.from({ length: 9 }, (_, k) => <tr key={k}><td /><td /><td /></tr>)}</tbody>
          </Revisions>
        </Box>
        <Box>
          <Names $h={59} $big><span>Client Name</span><span>Project Name</span></Names>
          <Slot $h={67} $big>WIN &amp; DOOR<br />SCHEDULE</Slot>
          <Slot $h={14} $spread><span>Project number</span><span>00-00-00</span></Slot>
          <Slot $h={14} $spread><span>Date</span><span>00/00/00</span></Slot>
          <Slot $h={13} $spread><span>Drawn by</span><span>Author</span></Slot>
          <Slot $h={14} $spread><span>Checked by</span><span>Checker</span></Slot>
          <Slot $h={26} $big>A3-05</Slot>
          <Slot $h={13} $spread><span>Scale</span></Slot>
        </Box>
      </TitleBlock>
    </Frame>
  </Sheet>
);

/* ---------- status bar ---------- */

const StatusBar = styled.footer`
  display: flex;
  align-items: center;
  flex: none;
  height: 22px;
  padding: 2px 0 0 2px;
  background: #cbcbcb;
`;

const StatusText = styled.span`
  width: 888px;
  white-space: nowrap;
`;

const Count = styled.span`
  width: 34px;
`;

const StatusEnd = styled.span`
  width: 46px;
`;

const S = ({ children }: { children: React.ReactNode }) => (
  <svg width="18" height="18" viewBox="0 0 18 18" strokeWidth="1.200">{children}</svg>
);
const cursor = <path d="M9 6v10l2.500-2 1.500 3.500 1.500-.7-1.500-3.300h3z" fill="#fff" stroke="#222" strokeWidth=".9" />;
const redX = <path d="M10 1l6 6M16 1l-6 6" stroke="#cc2418" strokeWidth="2.200" />;

export default function App() {
  return (
    <Window>
      <Global />
      <TitleRow />
      <RibbonTabs>
        <RibbonTab $kind="file">File</RibbonTab>
        <RibbonTab $kind="active">Architecture</RibbonTab>
        {tabNames.map((t) => <RibbonTab key={t}>{t}</RibbonTab>)}
        <RibbonToggle aria-label="Ribbon display">
          <svg width="16" height="10" viewBox="0 0 16 10"><rect x=".5" y=".5" width="15" height="9" rx="3" fill="#f2f2f2" stroke="#333" /><path d="M5 6.500h6L8 3z" fill="#333" /></svg>
          <Tri c="#111" />
        </RibbonToggle>
      </RibbonTabs>
      <Ribbon>
        {panels.map((p) => (
          <Panel key={p.title} $pad={p.pad} $end={p.end}>
            <Tools>
              {p.tools.map((t) => (
                <Tool key={t.icon} $w={t.w} $state={t.state}>
                  {toolIcons[t.icon]}
                  <ToolText>{t.label}</ToolText>
                  {t.arrow === "below" && <Tri c="#666" />}
                  {t.arrow === "side" && <SideArrow><Tri c="#666" /></SideArrow>}
                </Tool>
              ))}
            </Tools>
            <PanelTitle>{p.title}{p.menu && <Tri s={8} c="#333" />}</PanelTitle>
          </Panel>
        ))}
      </Ribbon>
      <OptionBar />
      <Body>
        <Side>
          <Properties>
            <SideHead>Properties<HeadClose aria-label="Close properties"><CloseX /></HeadClose></SideHead>
            <TypeBox>
              <Thumb><SheetIcon dark s={34} /></Thumb>
              <span>Sheet</span>
              <Grow />
              <Tri s={8} c="#333" />
            </TypeBox>
            <TypeRow>
              <SelectWrap $w={208} $h={22}>
                <Select aria-label="Selection type"><option>Sheet: WIN &amp; DOOR SCHEDULE</option></Select>
                <svg width="9" height="6" viewBox="0 0 9 6"><path d="M0.500 1l4 4 4-4" stroke="#666" strokeWidth="1.200" /></svg>
              </SelectWrap>
              <EditType>
                <svg width="16" height="16" viewBox="0 0 16 16" strokeWidth="1.200"><path d="M1 3l2-2h4v5l-1 2H1zM9 3l2-2h4v5M1 10l2-2h4v5l-1 2H1z" fill="#f5f5f5" stroke="#444" /><path d="M9 7h6v8H9z" fill="#fff" stroke="#333" /><path d="M10 9h4M12 11.500h2M12 13.500h2" stroke="#2f7cc0" /></svg>
                Edit Type
              </EditType>
            </TypeRow>
            <GridArea>
              <GridClip>
                <PropTable>
                  <colgroup><col width="131" /><col width="129" /><col /></colgroup>
                  <tbody>
                    {propRows.map((r, i) =>
                      r.head ? (
                        <tr key={i}><GroupHead colSpan={3}><GroupLine>{r.head}<Expand /></GroupLine></GroupHead></tr>
                      ) : (
                        <tr key={i}>
                          <Cell $dim={r.dim}><PropLabel htmlFor={`prop-${i}`}>{r.label}</PropLabel></Cell>
                          <Cell $dim={r.dim}>{r.value}</Cell>
                          <Cell>{r.extra}</Cell>
                        </tr>
                      )
                    )}
                  </tbody>
                </PropTable>
              </GridClip>
              <Bar $dir="v"><Scroll dir="v" parts={[0, 122, 121]} /></Bar>
            </GridArea>
            <PropFoot>
              <HelpLink href="#help">Properties help</HelpLink>
              <Apply disabled>Apply</Apply>
            </PropFoot>
          </Properties>
          <Browser>
            <SideHead>Project Browser - Residential-Building-vol-01<HeadClose aria-label="Close browser"><CloseX /></HeadClose></SideHead>
            <TreeArea>
              <Tree>
                {treeGroups.map((grp, gi) => (
                  <React.Fragment key={gi}>
                    {grp.name && (
                      <TreeRow><Line /><Blank /><Node open last={gi === 3} /><TreeText>{grp.name}</TreeText></TreeRow>
                    )}
                    {grp.sheets.map((s, si) => (
                      <TreeRow key={s}>
                        <Line /><Blank />{gi === 3 ? <Blank /> : <Line />}
                        <Node last={si === grp.sheets.length - 1} />
                        <TreeText $on={s.startsWith("A3-05")}>{s}</TreeText>
                      </TreeRow>
                    ))}
                  </React.Fragment>
                ))}
                <TreeRow>
                  <Node />
                  <svg width="16" height="16" viewBox="0 0 16 16" strokeWidth="1.200" stroke="#444b55"><path d="M1.500 2.500h6v5h-6zM1.500 10.500v3.500h12.500V2.500H10v8z" fill="#f0f2f5" /></svg>
                  <TreeText $root>Families</TreeText>
                </TreeRow>
                <TreeRow>
                  <Node />
                  <svg width="16" height="16" viewBox="0 0 16 16" strokeWidth="1.200" stroke="#444b55"><path d="M3.500 1.500h-2v13h2M12.500 1.500h2v13h-2" /><circle cx="7" cy="7" r="3" fill="#ccd5df" /><path d="M7 7h5v4l-2 2H7z" fill="#dfe6ee" /></svg>
                  <TreeText $root>Groups</TreeText>
                </TreeRow>
                <TreeRow>
                  <Leaf />
                  <svg width="16" height="18" viewBox="0 0 16 18" strokeWidth="2"><rect x="1" y="7" width="8" height="5" rx="2.500" stroke="#b98712" /><rect x="7" y="7" width="8" height="5" rx="2.500" stroke="#d8a32a" /></svg>
                  <TreeText $root>Revit Links</TreeText>
                </TreeRow>
              </Tree>
              <Bar $dir="v"><Scroll dir="v" parts={[221, 129, 0]} /></Bar>
            </TreeArea>
            <Bar $dir="h"><Scroll dir="h" parts={[0, 238, 4]} /><BarCorner /></Bar>
          </Browser>
        </Side>
        <Docs>
          <DocTabs>
            {docTabs.map(([t, w]) => <DocTab key={t} $w={w}><SheetIcon />{t}</DocTab>)}
            <DocTab $w={237} $on><SheetIcon dark />A3-05 - WIN &amp; DOOR SCHEDULE<CloseX /></DocTab>
            <Grow />
            <IconButton $w={18} aria-label="Tab list">
              <svg width="9" height="8" viewBox="0 0 9 8"><path d="M0 1h9" stroke="#333" strokeWidth="1.400" /><path d="M.5 3h8l-4 4z" fill="#333" /></svg>
            </IconButton>
          </DocTabs>
          <View>
            <Canvas>
              <SheetView />
              <NavBar>
                <NavEnd aria-label="Close navigation bar"><svg width="9" height="9" viewBox="0 0 9 9"><circle cx="4.500" cy="4.500" r="4" stroke="#aaa" /><path d="M3 3l3 3M6 3L3 6" stroke="#aaa" /></svg></NavEnd>
                <svg width="26" height="26" viewBox="0 0 26 26" stroke="#a8a8a8" strokeWidth="1.500"><path d="M12 2h8v10a9.500 9.500 0 1 1-8-10z" fill="#e6e8ee" /><circle cx="11" cy="11" r="5" fill="#fff" /><text x="12" y="25" fontSize="10" fontWeight="700" fill="#7fa3cc" stroke="none" fontFamily="Open Sans">2D</text></svg>
                <Tri c="#888" />
                <NavRule />
                <svg width="18" height="18" viewBox="0 0 18 18" stroke="#999"><path d="M1 5V1h4M1 1l10 10M10 1h3v3M13 1L1 13M1 10v3h3" /><circle cx="11.500" cy="11.500" r="3.500" fill="#eee" strokeWidth="1.500" /><path d="M14 14l4 4" strokeWidth="2" /></svg>
                <Tri c="#888" />
                <NavEnd aria-label="Navigation options"><svg width="9" height="9" viewBox="0 0 9 9"><circle cx="4.500" cy="4.500" r="4" stroke="#aaa" /><path d="M2.500 3.500h4l-2 3z" fill="#aaa" /></svg></NavEnd>
              </NavBar>
            </Canvas>
            <ViewBar $dir="v"><Scroll dir="v" parts={[376, 17, 375]} /></ViewBar>
          </View>
          <HFoot $dir="h">
            <IconButton $w={24} aria-label="Temporary hide"><svg width="16" height="14" viewBox="0 0 16 14" stroke="#333" strokeWidth="1.200"><path d="M1 2l2 5M11 1c3 0 4 1 4 4M1 4l3 6" /><circle cx="6" cy="10" r="3" fill="#dbe3ea" /><circle cx="12" cy="6" r="3" fill="#dbe3ea" /></svg></IconButton>
            <IconButton $w={20} aria-label="Reveal hidden elements"><svg width="8" height="12" viewBox="0 0 8 14" stroke="#2f7cae" strokeWidth="1.200"><circle cx="4" cy="4.500" r="3" fill="#fff" /><path d="M3 8v4h2V8" /></svg></IconButton>
            <Scroll dir="h" parts={[758, 17, 757]} />
          </HFoot>
        </Docs>
      </Body>
      <StatusBar>
        <StatusText>Title Blocks : MD_A2 metric (AUS) : Landscape</StatusText>
        <IconButton $w={28} aria-label="Worksets"><S><path d="M3 9h6v7H3zM11 9v7h4V9" fill="#cfe0f0" stroke="#2d5f95" /><path d="M6 7a4 4 0 0 1 7-3l1-2v5H9l2-1" fill="#4caf50" stroke="#2a6e2d" /></S></IconButton>
        <SelectWrap $w={206} $h={18}>
          <Select $plain aria-label="Active workset"><option></option></Select>
          <svg width="9" height="6" viewBox="0 0 9 6"><path d="M0.500 1l4 4 4-4" stroke="#aaa" strokeWidth="1.200" /></svg>
        </SelectWrap>
        <IconButton $w={30} aria-label="Editing requests"><S><path d="M5 2h8l2 3-5 3-4 9H3l3-9z" fill="#ddd" stroke="#8a8a8a" /></S></IconButton>
        <Count>:0</Count>
        <IconButton $w={18} aria-label="Design options"><S><path d="M2 2h14v14H2z" fill="#fff" stroke="#333b45" /><path d="M2 4h14" stroke="#333b45" strokeWidth="3" /><path d="M5 8h2M9 8h5M5 11h2M9 11h5M5 14h2M9 14h5" stroke="#333b45" /></S></IconButton>
        <IconButton $w={30} aria-label="Active only"><S><path d="M2 2h14v14H2z" fill="#a5a5a5" /><path d="M4 9h6v5M8 6v10l6-3" stroke="#e5e5e5" /></S></IconButton>
        <SelectWrap $w={205} $h={18}>
          <Select $plain aria-label="Design option"><option>Main Model</option></Select>
          <svg width="9" height="6" viewBox="0 0 9 6"><path d="M0.500 1l4 4 4-4" stroke="#aaa" strokeWidth="1.200" /></svg>
        </SelectWrap>
        <Grow />
        <IconButton $w={26} aria-label="Select links"><S><rect x="1" y="3" width="9" height="5" rx="2.500" stroke="#c9971c" strokeWidth="2" /><rect x="7" y="3" width="9" height="5" rx="2.500" stroke="#e0b13a" strokeWidth="2" />{cursor}</S></IconButton>
        <IconButton $w={26} aria-label="Select underlay"><S><path d="M1 14L8 4v6l-2 4zM2 11h8" fill="#cfe3f7" stroke="#2c6db5" />{redX}{cursor}</S></IconButton>
        <IconButton $w={26} aria-label="Select pinned"><S><path d="M3 2h9v3h-2v4h2v2H3V9h2V5H3zM7.500 11v6" fill="#f0a35a" stroke="#a3541b" />{cursor}</S></IconButton>
        <IconButton $w={26} aria-label="Select by face"><S><path d="M2 3l7-2v4M2 3v13l6-2" fill="#cfe3f7" stroke="#2c8ad0" strokeWidth="1.600" />{redX}{cursor}</S></IconButton>
        <IconButton $w={26} aria-label="Drag on selection"><S><path d="M6 1v10M1 6h10M4.500 2.500L6 1l1.500 1.500M2.500 4.500L1 6l1.500 1.500M4.500 9.500L6 11" stroke="#222" />{cursor}</S></IconButton>
        <IconButton $w={25} aria-label="Background processes"><S><circle cx="9" cy="9" r="5.500" stroke="#a5a5a5" strokeWidth="3" strokeDasharray="2.500 1.500" /></S></IconButton>
        <IconButton $w={22} aria-label="Filter"><S><path d="M1 2h16l-6 7v7l-4-2V9z" fill="#c5ccd3" stroke="#444b55" /></S></IconButton>
        <Count>:0</Count>
        <StatusEnd />
      </StatusBar>
    </Window>
  );
}
